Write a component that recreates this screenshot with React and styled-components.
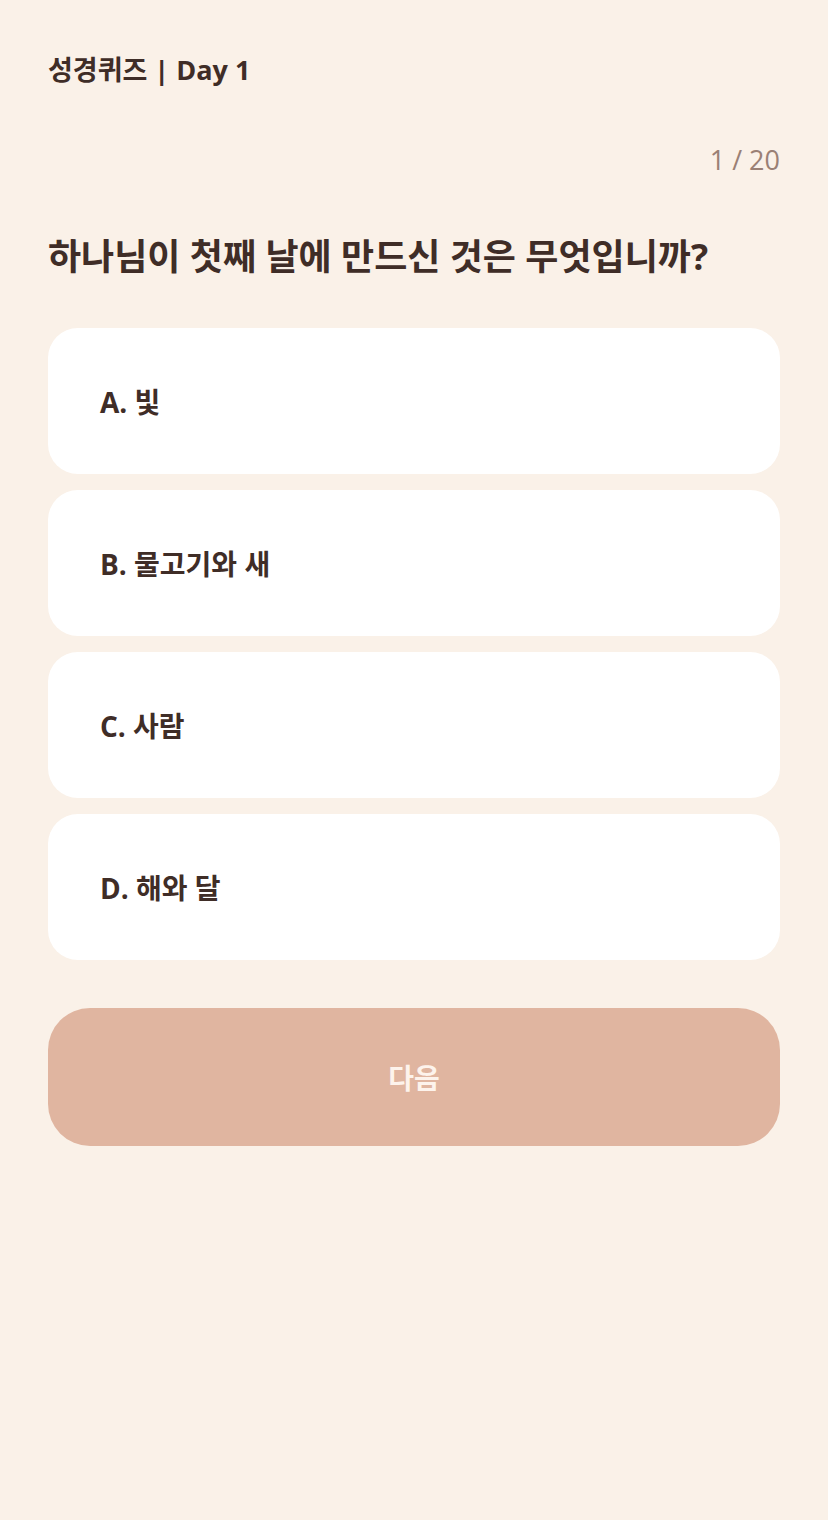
import styled, { createGlobalStyle } from "styled-components";

const GlobalStyle = createGlobalStyle`
  html, body {
    margin: 0;
    padding: 0;
    background: #faf1e8;
  }
  body {
    font-family: "Open Sans", "Noto Sans CJK KR", sans-serif;
    color: #3f2d27;
  }
`;

const Page = styled.div`
  min-height: 1520px;
  padding: 48px 48px 0;
  box-sizing: border-box;
  background: #faf1e8;
`;

const Header = styled.h1`
  margin: 0;
  font-size: 27px;
  font-weight: 700;
  line-height: 44px;
  color: #3f2d27;
`;

const Counter = styled.div`
  margin-top: 50px;
  text-align: right;
  font-size: 27px;
  line-height: 36px;
  color: #9a8075;
`;

const Question = styled.h2`
  margin: 54px 0 0;
  font-size: 36px;
  font-weight: 700;
  line-height: 50px;
  color: #3f2d27;
`;

const Options = styled.div`
  margin-top: 46px;
  display: flex;
  flex-direction: column;
  gap: 16px;
`;

const Option = styled.button`
  display: flex;
  align-items: center;
  height: 146px;
  padding: 0 52px;
  border: none;
  border-radius: 30px;
  background: #ffffff;
  font-family: inherit;
  font-size: 28px;
  font-weight: 700;
  color: #3f2d27;
  text-align: left;
  cursor: pointer;
`;

const NextButton = styled.button`
  margin-top: 48px;
  width: 100%;
  height: 138px;
  border: none;
  border-radius: 42px;
  background: #e0b5a0;
  font-family: inherit;
  font-size: 28px;
  font-weight: 700;
  color: #fdf3ec;
  cursor: pointer;
`;

const options = ["A. 빛", "B. 물고기와 새", "C. 사람", "D. 해와 달"];

export default function App() {
  return (
    <>
      <GlobalStyle />
      <Page>
        <Header>성경퀴즈 | Day 1</Header>
        <Counter>1 / 20</Counter>
        <Question>하나님이 첫째 날에 만드신 것은 무엇입니까?</Question>
        <Options>
          {options.map((o) => (
            <Option key={o}>{o}</Option>
          ))}
        </Options>
        <NextButton>다음</NextButton>
      </Page>
    </>
  );
}
